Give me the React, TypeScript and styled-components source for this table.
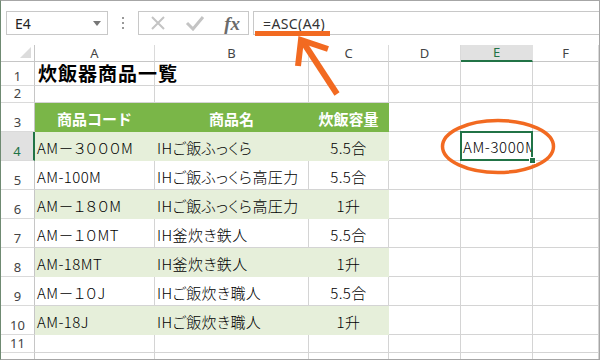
import React from "react";
import styled, { createGlobalStyle } from "styled-components";

const GlobalStyle = createGlobalStyle`
  body {
    margin: 0;
    background: #fff;
    font-family: "Noto Sans CJK JP", sans-serif;
  }
`;

const GREEN = "#7ab648";
const LIGHT = "#e6efda";
const GRID = "#d4d4d4";
const ACCENT = "#f26a21";
const SELECT = "#217346";

type Row = { code: string; name: string; size: string };

// full-width and half-width characters are mixed on purpose (ASC demo)
const rows: Row[] = [
  { code: "AM－３０００M", name: "IHご飯ふっくら", size: "5.5合" },
  { code: "AM-100M", name: "IHご飯ふっくら高圧力", size: "5.5合" },
  { code: "AM－１８０M", name: "IHご飯ふっくら高圧力", size: "1升" },
  { code: "AM－１０MT", name: "IH釜炊き鉄人", size: "5.5合" },
  { code: "AM-18MT", name: "IH釜炊き鉄人", size: "1升" },
  { code: "AM－１０J", name: "IHご飯炊き職人", size: "5.5合" },
  { code: "AM-18J", name: "IHご飯炊き職人", size: "1升" },
];

const columns = ["A", "B", "C", "D", "E", "F"];

const Frame = styled.div`
  position: relative;
  width: 600px;
  height: 360px;
  box-sizing: border-box;
  border: 1px solid #a6a6a6;
  border-left: 1px solid #6f8a72;
  overflow: hidden;
  background: #fff;
`;

const FormulaBar = styled.div`
  display: flex;
  align-items: stretch;
  height: 24px;
  padding: 10px 0 10px 5px;
`;

const NameBox = styled.div`
  width: 102px;
  box-sizing: border-box;
  border: 1px solid #c8c8c8;
  display: flex;
  align-items: center;
  justify-content: space-between;
  padding: 0 6px 0 8px;
  font-family: "Noto Sans", sans-serif;
  font-size: 14px;
  color: #222;
`;

const DropArrow = styled.span`
  width: 0;
  height: 0;
  border-left: 4px solid transparent;
  border-right: 4px solid transparent;
  border-top: 5px solid #777;
`;

const Dots = styled.div`
  width: 30px;
  display: flex;
  flex-direction: column;
  align-items: center;
  justify-content: center;
  gap: 3px;
  & > span {
    width: 2px;
    height: 2px;
    background: #999;
  }
`;

const FxBox = styled.div`
  width: 111px;
  box-sizing: border-box;
  border: 1px solid #c8c8c8;
  display: flex;
  align-items: center;
  justify-content: space-between;
  padding: 0 8px 0 11px;
`;

const Fx = styled.span`
  font-family: "Liberation Serif", serif;
  font-style: italic;
  font-weight: bold;
  font-size: 19px;
  color: #6a6a6a;
  line-height: 1;
`;

const FormulaInput = styled.div`
  flex: 1;
  margin-left: 4px;
  box-sizing: border-box;
  border: 1px solid #c8c8c8;
  border-right: none;
  display: flex;
  align-items: center;
  padding-left: 9px;
  font-family: "Noto Sans", sans-serif;
  font-size: 14px;
  letter-spacing: 0.4px;
  color: #333;
`;

const Sheet = styled.div`
  display: grid;
  grid-template-columns: 34px 120px 154px 80px 72px 72px 1fr;
  grid-template-rows: 17px 24px 17px repeat(8, 29px) 18px 20px;
`;

const Corner = styled.div`
  box-sizing: border-box;
  border-right: 1px solid #c6c6c6;
  border-bottom: 1px solid #c6c6c6;
  display: flex;
  align-items: flex-end;
  justify-content: flex-end;
  padding: 0 3px 3px 0;
`;

const CornerMark = styled.span`
  width: 0;
  height: 0;
  border-left: 11px solid transparent;
  border-bottom: 11px solid #dcdcdc;
`;

const ColHead = styled.div<{ $active?: boolean }>`
  box-sizing: border-box;
  display: flex;
  align-items: center;
  justify-content: center;
  font-family: "Noto Sans", sans-serif;
  font-size: 13px;
  line-height: 15px;
  color: ${(p) => (p.$active ? SELECT : "#444")};
  background: ${(p) => (p.$active ? "#e1e1e1" : "#fff")};
  border-right: 1px solid ${(p) => (p.$active ? "#e1e1e1" : "#dadada")};
  border-bottom: ${(p) => (p.$active ? `2px solid ${SELECT}` : "1px solid #c6c6c6")};
`;

const RowHead = styled.div<{ $active?: boolean }>`
  box-sizing: border-box;
  display: flex;
  align-items: flex-end;
  justify-content: center;
  padding-bottom: 1px;
  font-family: "Noto Sans", sans-serif;
  font-size: 13px;
  line-height: 15px;
  color: ${(p) => (p.$active ? SELECT : "#444")};
  background: ${(p) => (p.$active ? "#e1e1e1" : "#fff")};
  border-right: ${(p) => (p.$active ? `2px solid ${SELECT}` : "1px solid #c6c6c6")};
  border-bottom: 1px solid #dadada;
`;

const Cell = styled.div<{
  $fill?: string;
  $align?: "left" | "center";
  $head?: boolean;
}>`
  position: relative;
  box-sizing: border-box;
  display: flex;
  align-items: center;
  justify-content: ${(p) => (p.$align === "center" ? "center" : "flex-start")};
  padding: 3px 2px 0;
  white-space: nowrap;
  overflow: hidden;
  font-size: 15px;
  line-height: 20px;
  font-weight: ${(p) => (p.$head ? "bold" : 300)};
  font-feature-settings: ${(p) => (p.$head ? "normal" : '"palt"')};
  letter-spacing: ${(p) => (p.$head ? "0" : "0.4px")};
  color: ${(p) => (p.$head ? "#fff" : "#000")};
  background: ${(p) => p.$fill ?? "transparent"};
  border-right: 1px solid ${(p) => p.$fill ?? GRID};
  border-bottom: 1px solid ${(p) => p.$fill ?? GRID};
`;

const Title = styled(Cell)`
  overflow: visible;
  align-items: flex-end;
  padding: 0 0 1px 3px;
  font-size: 19px;
  line-height: 22px;
  font-weight: bold;
  font-feature-settings: normal;
  letter-spacing: 1px;
`;

const Selected = styled(Cell)`
  overflow: visible;
  border: none;
  padding: 0;
`;

const SelectedInner = styled.div`
  position: absolute;
  inset: -1px 0 0 -1px;
  border: 2px solid ${SELECT};
  display: flex;
  align-items: center;
  padding: 2px 0 0 1px;
  overflow: hidden;
  font-size: 15px;
  font-weight: 300;
  letter-spacing: 0.6px;
`;

const Handle = styled.span`
  position: absolute;
  right: -3px;
  bottom: -3px;
  width: 5px;
  height: 5px;
  background: ${SELECT};
  border: 1px solid #fff;
  z-index: 2;
`;

const Overlay = styled.svg`
  position: absolute;
  left: -1px;
  top: -1px;
  pointer-events: none;
`;

const Empty = () => <Cell />;

export default function App() {
  const emptyRow = (n: number | null, active = false) => (
    <React.Fragment key={`r${n}`}>
      <RowHead $active={active}>{n}</RowHead>
      {columns.map((c) => (
        <Empty key={c} />
      ))}
    </React.Fragment>
  );

  return (
    <>
      <GlobalStyle />
      <Frame>
        <FormulaBar>
          <NameBox>
            E4
            <DropArrow />
          </NameBox>
          <Dots>
            <span />
            <span />
            <span />
          </Dots>
          <FxBox>
            <svg width="16" height="16" viewBox="0 0 16 16">
              <path d="M2 2 L14 14 M14 2 L2 14" stroke="#c4c4c4" strokeWidth="2" fill="none" />
            </svg>
            <svg width="20" height="16" viewBox="0 0 20 16">
              <path d="M2 8 L8 14 L18 2" stroke="#c4c4c4" strokeWidth="3" fill="none" />
            </svg>
            <Fx>fx</Fx>
          </FxBox>
          <FormulaInput>=ASC(A4)</FormulaInput>
        </FormulaBar>

        <Sheet>
          <Corner>
            <CornerMark />
          </Corner>
          {columns.map((c) => (
            <ColHead key={c} $active={c === "E"}>
              {c}
            </ColHead>
          ))}

          <RowHead>1</RowHead>
          <Title>炊飯器商品一覧</Title>
          <Empty />
          <Empty />
          <Empty />
          <Empty />
          <Empty />

          {emptyRow(2)}

          <RowHead>3</RowHead>
          <Cell $fill={GREEN} $align="center" $head>
            商品コード
          </Cell>
          <Cell $fill={GREEN} $align="center" $head>
            商品名
          </Cell>
          <Cell $fill={GREEN} $align="center" $head>
            炊飯容量
          </Cell>
          <Empty />
          <Empty />
          <Empty />

          {rows.map((r, i) => {
            const fill = i % 2 === 0 ? LIGHT : undefined;
            return (
              <React.Fragment key={r.code}>
                <RowHead $active={i === 0}>{i + 4}</RowHead>
                <Cell $fill={fill}>{r.code}</Cell>
                <Cell $fill={fill}>{r.name}</Cell>
                <Cell $fill={fill} $align="center">
                  {r.size}
                </Cell>
                <Empty />
                {i === 0 ? (
                  <Selected>
                    <SelectedInner>AM-3000M</SelectedInner>
                    <Handle />
                  </Selected>
                ) : (
                  <Empty />
                )}
                <Empty />
              </React.Fragment>
            );
          })}

          {emptyRow(11)}
          {emptyRow(null)}
        </Sheet>

        <Overlay width="600" height="360" viewBox="0 0 600 360">
          <rect x="255" y="31" width="75" height="5" fill={ACCENT} />
          <line x1="337" y1="94" x2="303" y2="42" stroke={ACCENT} strokeWidth="6" />
          <polyline
            points="298,66 301,40 328,49"
            stroke={ACCENT}
            strokeWidth="6"
            fill="none"
            strokeLinejoin="miter"
          />
          <ellipse cx="498" cy="146.5" rx="55.5" ry="26" stroke={ACCENT} strokeWidth="3.5" fill="none" />
        </Overlay>
      </Frame>
    </>
  );
}
